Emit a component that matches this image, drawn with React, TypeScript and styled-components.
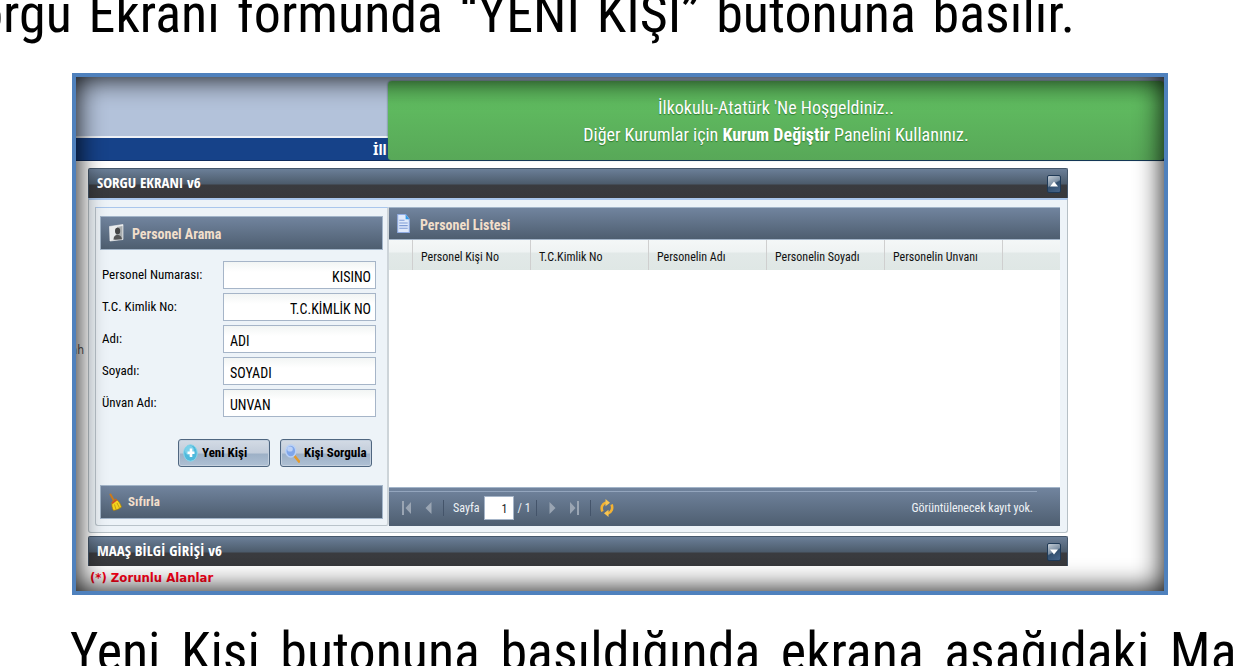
import React from 'react';
import styled, { createGlobalStyle } from 'styled-components';

const narrow = `'Roboto Condensed', 'Arial Narrow', 'Liberation Sans', sans-serif`;
const titleFont = `'Open Sans Condensed', 'Noto Sans', sans-serif`;
const humanist = `'DejaVu Sans Condensed', 'Noto Sans', sans-serif`;

const GlobalStyle = createGlobalStyle`
  *, *::before, *::after { box-sizing: border-box; }
  body { margin: 0; background: #fff; color: #000; overflow: hidden; font-family: ${narrow}; }
  button, input { font: inherit; color: inherit; margin: 0; }
`;

const Page = styled.main`
  overflow: hidden;
`;

const Sentence = styled.p`
  margin: 0;
  font-size: 54px;
  line-height: 52px;
  text-align-last: justify;
`;

const Opening = styled(Sentence)`
  height: 73px;
  margin: -12px 164px 12px -52px;
`;

const Closing = styled(Sentence)`
  margin: 31px -48px 0 70px;
  height: 41px;
`;

const Figure = styled.section`
  position: relative;
  margin: 0 71px 0 72px;
  border: 4px solid #4f81bd;
  background: #fff;
  overflow: hidden;
  &::after {
    content: '';
    position: absolute;
    inset: 0;
    pointer-events: none;
    box-shadow: inset 0 0 28px #000;
  }
`;

const Masthead = styled.header`
  position: relative;
  height: 84px;
  display: flex;
  flex-direction: column;
  background: #b3c2da;
`;

const SchoolStrip = styled.div`
  margin-top: auto;
  height: 25px;
  border-top: 2px solid #eef1f6;
  border-bottom: 1px solid #0d2a5c;
  background: #164289;
  color: #fff;
  font: bold 14px/24px 'Noto Sans', sans-serif;
  padding-left: 297px;
`;

const Welcome = styled.div`
  position: absolute;
  top: 4px;
  right: 0;
  bottom: 1px;
  left: 312px;
  padding-top: 13px;
  border-radius: 4px 4px 3px 3px;
  background: linear-gradient(#58b258, #5fba5f 30%, #58a858);
  box-shadow: 0 0 2px #2d5c4a;
  color: #fff;
  text-align: center;
  font-size: 18px;
  line-height: 27px;
  text-shadow: 0 1px 1px #2f7a2f;
`;

const Workspace = styled.div`
  display: flex;
  padding: 7px 96px 4px 0;
`;

const Gutter = styled.div`
  flex: none;
  width: 12px;
  display: flex;
  justify-content: flex-end;
  overflow: hidden;
  padding: 174px 4px 0 0;
  color: #555;
  font: 12px/16px ${humanist};
`;

const Panels = styled.div`
  flex: 1;
  min-width: 0;
`;

const PanelBar = styled.div`
  display: flex;
  align-items: center;
  justify-content: space-between;
  height: 30px;
  padding: 0 6px 0 8px;
  border: solid #44566a;
  border-width: 1px 1px 0;
  border-radius: 2px 2px 0 0;
  background: linear-gradient(#6b7f98, #4c5b6b 15px, #3a3b3f 16px, #38393c);
  color: #fff;
`;

const PanelTitle = styled.h2`
  margin: 0;
  padding-bottom: 3px;
  font: bold 15px/18px ${titleFont};
`;

const Toggle = styled.button`
  width: 14px;
  height: 18px;
  padding: 0;
  display: grid;
  place-items: center;
  border: 1px solid #1f3a57;
  border-radius: 2px;
  background: linear-gradient(150deg, #c3ccd5, #7d90a4 45%, #33506f 52%, #46658a);
`;

const PanelBody = styled.div`
  display: flex;
  height: 335px;
  padding: 7px 7px 6px 6px;
  border: 1px solid #b6c0c6;
  border-top: 2px solid #a9c6ec;
  border-radius: 0 0 3px 3px;
  background: #edf3f8;
  margin-bottom: 3px;
`;

const Search = styled.form`
  flex: none;
  width: 294px;
  display: flex;
  flex-direction: column;
  padding: 8px 4px 6px 4px;
  border: 1px solid #b9c3ca;
  border-top-color: #a9c6ec;
  border-right: 2px solid #cdd4d9;
  border-radius: 0 0 3px 3px;
`;

const Bar = styled.div`
  display: flex;
  align-items: center;
  flex: none;
  height: 34px;
  gap: 8px;
  padding: 0 8px;
  border: 1px solid #a3b5c9;
  background: linear-gradient(#71849e, #4e5e70);
  color: #f2dfcb;
  font-size: 14px;
  line-height: 18px;
  font-weight: bold;
`;

const ListBar = styled(Bar)`
  border-width: 1px 0;
  height: 33px;
  gap: 10px;
`;

const BarTitle = styled.h3`
  margin: 0;
  padding-top: 2px;
  font: inherit;
`;

const ResetButton = styled.button`
  display: flex;
  align-items: center;
  gap: 6px;
  padding: 0;
  border: 0;
  background: none;
  font-size: 13px;
`;

const Fields = styled.div`
  display: grid;
  gap: 4px;
  margin: 11px 7px 0 2px;
`;

const Field = styled.div`
  display: grid;
  grid-template-columns: 121px 1fr;
  align-items: center;
  font-size: 14px;
  line-height: 18px;
`;

const FieldLabel = styled.label`
  font-size: 13px;
  white-space: nowrap;
`;

const TextBox = styled.input<{ $align?: 'left' | 'right' }>`
  width: 100%;
  height: 28px;
  padding: 4px 4px 0 6px;
  border: 1px solid #a6b5c8;
  background: linear-gradient(#f2f5f4, #fff 10px);
  text-align: ${(p) => p.$align ?? 'left'};
`;

const Actions = styled.div`
  display: flex;
  justify-content: flex-end;
  gap: 10px;
  margin: 22px 11px auto 0;
`;

const Action = styled.button`
  display: flex;
  align-items: center;
  gap: 4px;
  width: 92px;
  height: 28px;
  padding: 0 0 0 4px;
  border: 1px solid #4f6680;
  border-radius: 3px;
  background: linear-gradient(#d3dbe5, #c2ccda 50%, #9db0c6 54%, #afc0d4);
  box-shadow: inset 0 0 0 1px #c4d0de;
  font-size: 13px;
  line-height: 18px;
  font-weight: bold;
  white-space: nowrap;
  svg { flex: none; }
`;

const List = styled.div`
  flex: 1;
  min-width: 0;
  display: flex;
  flex-direction: column;
  background: #fff;
`;

const Grid = styled.table`
  width: 100%;
  table-layout: fixed;
  border-collapse: separate;
  border-spacing: 0;
  color: #111;
  font-size: 12px;
  line-height: 16px;
`;

const Column = styled.th<{ $width?: number }>`
  width: ${(p) => (p.$width ? `${p.$width}px` : 'auto')};
  height: 30px;
  padding: 3px 0 0 8px;
  border-right: 1px solid #cfcfcf;
  background: linear-gradient(#f4f7f7, #eff3f3 12px, #e2e9e8 13px, #dfe7e5);
  text-align: left;
  font-weight: normal;
  white-space: nowrap;
  &:last-child { border-right: 0; }
`;

const Pager = styled.nav`
  display: flex;
  height: 39px;
  margin-top: auto;
  padding: 3px 23px 0 0;
  border: solid #a3b5c9;
  border-width: 1px 0 0;
  background: linear-gradient(#71849e, #4e5e70);
  color: #eef2f6;
  font-size: 12px;
  line-height: 16px;
`;

const PagerRow = styled.div`
  flex: 1;
  display: flex;
  align-items: center;
  gap: 2px;
  padding: 0 4px 2px 7px;
  border-top: 1px solid #93a5bd;
`;

const PagerButton = styled.button`
  width: 20px;
  height: 22px;
  display: grid;
  place-items: center;
  padding: 0;
  border: 0;
  background: none;
`;

const Divider = styled.span`
  width: 1px;
  height: 16px;
  margin: 0 4px 0 3px;
  background: #44546a;
`;

const PageLabel = styled.label`
  display: flex;
  align-items: center;
  gap: 4px;
  padding: 0 2px 0 3px;
`;

const PageBox = styled.input`
  width: 30px;
  height: 24px;
  padding: 2px 5px 0 0;
  border: 1px solid #a6b5c8;
  background: #fff;
  color: #222;
  text-align: right;
`;

const Status = styled.span`
  margin-left: auto;
`;

const Required = styled.p`
  margin: 0;
  padding: 3px 0 1px 2px;
  color: #ff0018;
  font: bold 13px/17px ${humanist};
`;

const Caret = ({ down }: { down?: boolean }) => (
  <svg width="10" height="6" viewBox="0 0 10 6" aria-hidden="true">
    <path d={down ? 'M1 0.5h8L5 5.5z' : 'M1 5.5h8L5 0.5z'} fill="#fff" />
  </svg>
);

const PersonIcon = () => (
  <svg width="15" height="18" viewBox="0 0 15 18" aria-hidden="true">
    <path d="M0.5 2.5 14 0.5v15L1 17z" fill="#e9ebec" stroke="#f7f7f7" strokeWidth=".6" />
    <path d="M8 3l5.5-1v13L6 16z" fill="#a9adaf" />
    <ellipse cx="8.6" cy="7" rx="2.6" ry="3.2" fill="#454545" />
    <path d="M4.5 15.8c0-3.4 1.6-4.8 4.1-5 2.3.2 3.9 1.6 4.4 4.4z" fill="#555" />
  </svg>
);

const PageIcon = () => (
  <svg width="13" height="19" viewBox="0 0 12 18" aria-hidden="true">
    <path d="M.5.5h7.5L11.5 5v12.5H.5z" fill="#dfe9fb" stroke="#8fabe2" />
    <path d="M8 .5V5h3.5z" fill="#2f9be8" />
    <path d="M2 6h5M2 8.5h8M2 11h8M2 13.5h8" stroke="#7f9cd6" />
  </svg>
);

const BroomIcon = () => (
  <svg width="13" height="18" viewBox="0 0 13 18" aria-hidden="true">
    <path d="M1.5 1.5 4.8 7.5" stroke="#c97a1c" strokeWidth="2" strokeLinecap="round" />
    <path d="M3 9l3.8-3.2C9.5 8 11.5 10.5 12.5 14c-2 1.8-4.5 3-8 3.5C3 15 2.5 12 3 9z" fill="#f5d21f" stroke="#a67c08" strokeWidth=".7" />
    <path d="M2.8 9.2 7 5.8l1.3 1.4-5 4z" fill="#c8522a" />
    <path d="M5.5 11.5l1.5 5M8 10l2.5 5" stroke="#b9930e" strokeWidth=".8" />
  </svg>
);

const AddIcon = () => (
  <svg width="15" height="18" viewBox="0 0 15 18" aria-hidden="true">
    <ellipse cx="7.5" cy="9" rx="6.8" ry="8.2" fill="#4fb9dc" stroke="#8ad6ea" />
    <ellipse cx="6.5" cy="6.5" rx="4.5" ry="5" fill="#8fdcef" opacity=".7" />
    <path d="M8 4.5v8.5M4.5 8.8h7" stroke="#fff" strokeWidth="2.6" />
  </svg>
);

const SearchIcon = () => (
  <svg width="15" height="19" viewBox="0 0 15 19" aria-hidden="true">
    <path d="M9.5 12 14 17.5" stroke="#e39a2c" strokeWidth="2.6" strokeLinecap="round" />
    <ellipse cx="5.8" cy="7" rx="5" ry="6" fill="#7fa6ea" stroke="#b9d0f5" strokeWidth="1.4" />
    <ellipse cx="5" cy="5" rx="2.8" ry="2.6" fill="#d5e4fb" opacity=".7" />
  </svg>
);

const Arrow = ({ forward, stop }: { forward?: boolean; stop?: boolean }) => (
  <svg width="11" height="14" viewBox="0 0 11 14" aria-hidden="true">
    <g fill="#9aa5b3" transform={forward ? 'rotate(180 5.5 7)' : undefined}>
      <path d={stop ? 'M10 1v12L4.5 7z' : 'M8.5 1v12L2.5 7z'} />
      {stop && <path d="M1 0h2v14H1z" />}
    </g>
  </svg>
);

const RefreshIcon = () => (
  <svg width="14" height="18" viewBox="0 0 14 18" aria-hidden="true">
    <g fill="none" stroke="#f3b233" strokeWidth="2.6">
      <path d="M2.4 12.5C.8 8.5 2 4.8 6 3.5" />
      <path d="M11.6 5.5c1.4 4 .2 7.7-3.8 9" />
    </g>
    <path d="M5.5 0 10 3.8 5.5 7.2zM8.5 10.8 4 14.2 8.5 18z" fill="#f8c552" />
  </svg>
);

type FieldSpec = { id: string; label: string; value: string; align?: 'left' | 'right' };

const fields: FieldSpec[] = [
  { id: 'numara', label: 'Personel Numarası:', value: 'KISINO', align: 'right' },
  { id: 'kimlik', label: 'T.C. Kimlik No:', value: 'T.C.KİMLİK NO', align: 'right' },
  { id: 'adi', label: 'Adı:', value: 'ADI' },
  { id: 'soyadi', label: 'Soyadı:', value: 'SOYADI' },
  { id: 'unvan', label: 'Ünvan Adı:', value: 'UNVAN' },
];

const columns = ['Personel Kişi No', 'T.C.Kimlik No', 'Personelin Adı', 'Personelin Soyadı', 'Personelin Unvanı'];

export default function App() {
  return (
    <Page lang="tr">
      <GlobalStyle />
      <Opening>Sorgu Ekranı formunda “YENİ KİŞİ” butonuna basılır.</Opening>

      <Figure>
        <Masthead>
          <SchoolStrip>İll</SchoolStrip>
          <Welcome>
            İlkokulu-Atatürk 'Ne Hoşgeldiniz..
            <br />
            Diğer Kurumlar için <b>Kurum Değiştir</b> Panelini Kullanınız.
          </Welcome>
        </Masthead>

        <Workspace>
          <Gutter>ah</Gutter>
          <Panels>
            <PanelBar>
              <PanelTitle>SORGU EKRANI v6</PanelTitle>
              <Toggle type="button" aria-label="Daralt"><Caret /></Toggle>
            </PanelBar>
            <PanelBody>
              <Search onSubmit={(e) => e.preventDefault()}>
                <Bar>
                  <PersonIcon />
                  <BarTitle>Personel Arama</BarTitle>
                </Bar>
                <Fields>
                  {fields.map((f) => (
                    <Field key={f.id}>
                      <FieldLabel htmlFor={f.id}>{f.label}</FieldLabel>
                      <TextBox id={f.id} defaultValue={f.value} $align={f.align} />
                    </Field>
                  ))}
                </Fields>
                <Actions>
                  <Action type="button"><AddIcon />Yeni Kişi</Action>
                  <Action type="submit"><SearchIcon />Kişi Sorgula</Action>
                </Actions>
                <Bar>
                  <ResetButton type="reset"><BroomIcon />Sıfırla</ResetButton>
                </Bar>
              </Search>

              <List>
                <ListBar>
                  <PageIcon />
                  <BarTitle>Personel Listesi</BarTitle>
                </ListBar>
                <Grid>
                  <thead>
                    <tr>
                      <Column $width={24} />
                      {columns.map((c) => (
                        <Column key={c} scope="col" $width={118}>{c}</Column>
                      ))}
                      <Column />
                    </tr>
                  </thead>
                </Grid>
                <Pager aria-label="Sayfalama">
                  <PagerRow>
                    <PagerButton type="button" aria-label="İlk sayfa"><Arrow stop /></PagerButton>
                    <PagerButton type="button" aria-label="Önceki sayfa"><Arrow /></PagerButton>
                    <Divider />
                    <PageLabel>Sayfa <PageBox defaultValue="1" /></PageLabel>
                    <span>/ 1</span>
                    <Divider />
                    <PagerButton type="button" aria-label="Sonraki sayfa"><Arrow forward /></PagerButton>
                    <PagerButton type="button" aria-label="Son sayfa"><Arrow forward stop /></PagerButton>
                    <Divider />
                    <PagerButton type="button" aria-label="Yenile"><RefreshIcon /></PagerButton>
                    <Status>Görüntülenecek kayıt yok.</Status>
                  </PagerRow>
                </Pager>
              </List>
            </PanelBody>

            <PanelBar>
              <PanelTitle>MAAŞ BİLGİ GİRİŞİ v6</PanelTitle>
              <Toggle type="button" aria-label="Genişlet"><Caret down /></Toggle>
            </PanelBar>
            <Required>(*) Zorunlu Alanlar</Required>
          </Panels>
        </Workspace>
      </Figure>

      <Closing>Yeni Kişi butonuna basıldığında ekrana aşağıdaki Maaş</Closing>
    </Page>
  );
}
